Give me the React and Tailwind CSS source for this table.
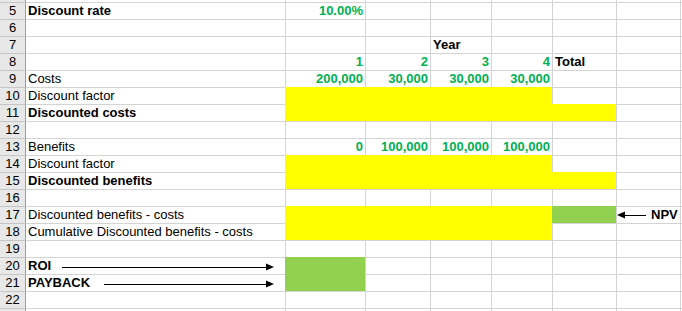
import React from 'react';

const WIDTHS = ['w-[259px]', 'w-[80px]', 'w-[65px]', 'w-[61px]', 'w-[61px]', 'w-[64px]', 'w-[64px]', 'w-[2px]'];

const FILLS = {
  y: 'bg-[#ffff00] border-transparent',
  g: 'bg-[#92d050] border-transparent',
};

// fill: one letter per column B..F (y = yellow, g = green)
const rows = [
  { n: 5, a: 'Discount rate', ab: true, nums: ['10.00%'] },
  { n: 6 },
  { n: 7, year: true },
  { n: 8, nums: ['1', '2', '3', '4'], total: true },
  { n: 9, a: 'Costs', nums: ['200,000', '30,000', '30,000', '30,000'] },
  { n: 10, a: 'Discount factor', fill: 'yyyy' },
  { n: 11, a: 'Discounted costs', ab: true, fill: 'yyyyy' },
  { n: 12 },
  { n: 13, a: 'Benefits', nums: ['0', '100,000', '100,000', '100,000'] },
  { n: 14, a: 'Discount factor', fill: 'yyyy' },
  { n: 15, a: 'Discounted benefits', ab: true, fill: 'yyyyy' },
  { n: 16 },
  { n: 17, a: 'Discounted benefits - costs', fill: 'yyyyg', npv: true },
  { n: 18, a: 'Cumulative Discounted benefits - costs', fill: 'yyyy' },
  { n: 19 },
  { n: 20, a: 'ROI', ab: true, fill: 'g', arrow: 'left-[36px] w-[212px]' },
  { n: 21, a: 'PAYBACK', ab: true, fill: 'g', arrow: 'left-[78px] w-[170px]' },
  { n: 22 },
];

const Head = ({ dir }) => (
  <svg width="8" height="8" viewBox="0 0 8 8" className="shrink-0">
    {dir === 'right' ? <polygon points="0,0.5 8,4 0,7.5" fill="black" /> : <polygon points="8,0.5 0,4 8,7.5" fill="black" />}
  </svg>
);

const Row = ({ r }) => {
  const fill = r.fill || '';
  return (
    <div className="flex h-[17px]">
      <div className="w-[26px] shrink-0 border-t border-r border-t-[#c6c6c6] border-r-[#9c9c9c] bg-[#e8e8e8] text-center leading-[16px]">
        {r.n}
      </div>
      <div className={`${WIDTHS[0]} relative shrink-0 border-t border-[#d4d4d4] pl-[2px] leading-[16px] whitespace-nowrap ${r.ab ? 'font-bold' : ''}`}>
        {r.a}
        {/* drawn arrow over the sheet */}
        {r.arrow && (
          <div className={`absolute top-[5px] flex items-center ${r.arrow}`}>
            <div className="h-px flex-1 bg-black" />
            <Head dir="right" />
          </div>
        )}
      </div>
      {[1, 2, 3, 4, 5, 6, 7].map((i) => {
        const f = fill[i - 1];
        const num = r.nums && r.nums[i - 1];
        return (
          <div
            key={i}
            className={`${WIDTHS[i]} shrink-0 border-t border-l leading-[16px] whitespace-nowrap ${f ? FILLS[f] : 'border-[#d4d4d4]'} ${num ? 'text-right pr-[2px] font-bold text-[#00b050]' : 'pl-[2px]'}`}
          >
            {num}
            {r.year && i === 3 && <span className="font-bold">Year</span>}
            {r.total && i === 5 && <span className="font-bold">Total</span>}
            {r.npv && i === 6 && (
              <div className="flex items-center h-[16px] -ml-[2px]">
                <div className="flex w-[29px] items-center">
                  <Head dir="left" />
                  <div className="h-px flex-1 bg-black" />
                </div>
                <span className="ml-[5px] font-bold">NPV</span>
              </div>
            )}
          </div>
        );
      })}
    </div>
  );
};

export default function App() {
  return (
    <div className="w-[682px] h-[311px] overflow-hidden bg-white text-[13px] text-black" style={{ fontFamily: '"Liberation Sans", Arial, sans-serif' }}>
      {/* partial row 4 */}
      <div className="flex h-[2px]">
        <div className="w-[26px] shrink-0 border-r border-[#9c9c9c] bg-[#e8e8e8]" />
        <div className={`${WIDTHS[0]} shrink-0`} />
        {[1, 2, 3, 4, 5, 6, 7].map((i) => (
          <div key={i} className={`${WIDTHS[i]} shrink-0 border-l border-[#d4d4d4]`} />
        ))}
      </div>
      {rows.map((r) => (
        <Row key={r.n} r={r} />
      ))}
      {/* partial row 23 */}
      <div className="flex h-[3px]">
        <div className="w-[26px] shrink-0 border-t border-r border-t-[#c6c6c6] border-r-[#9c9c9c] bg-[#e8e8e8]" />
        <div className={`${WIDTHS[0]} shrink-0 border-t border-[#d4d4d4]`} />
        {[1, 2, 3, 4, 5, 6, 7].map((i) => (
          <div key={i} className={`${WIDTHS[i]} shrink-0 border-t border-l border-[#d4d4d4]`} />
        ))}
      </div>
    </div>
  );
}
